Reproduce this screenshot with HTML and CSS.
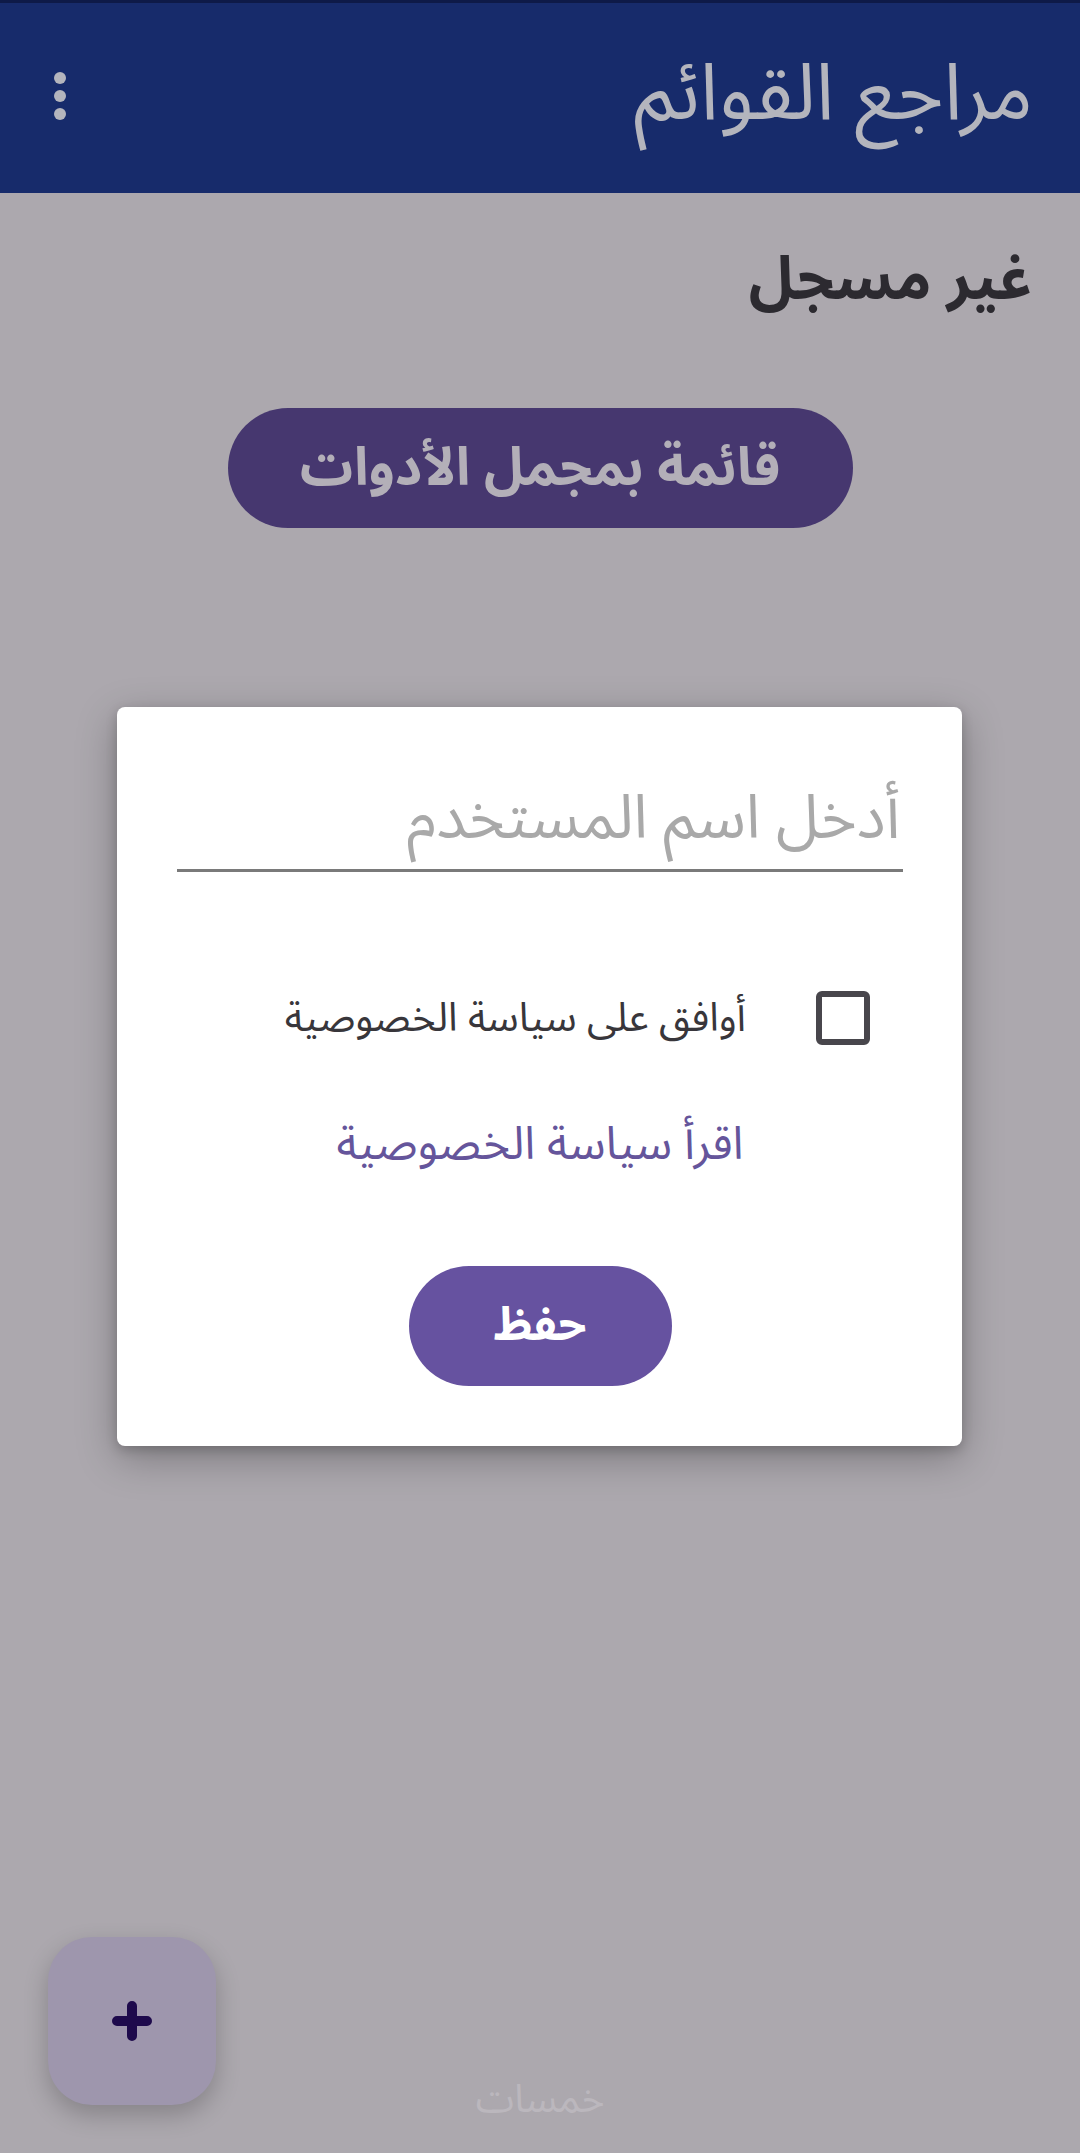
FILE: index.html
```html
<!DOCTYPE html>
<html lang="ar" dir="rtl">
<head>
<meta charset="utf-8">
<title>مراجع القوائم</title>
<link rel="stylesheet" href="styles.css">
</head>
<body>
<div class="screen">
  <header class="appbar">
    <h1 class="appbar-title">مراجع القوائم</h1>
    <button class="menu-btn" aria-label="المزيد">
      <span class="dot"></span><span class="dot"></span><span class="dot"></span>
    </button>
  </header>

  <main class="content">
    <h2 class="status">غير مسجل</h2>
    <div class="tools-wrap">
      <button class="tools-btn">قائمة بمجمل الأدوات</button>
    </div>
  </main>

  <div class="dialog">
    <div class="field">
      <div class="placeholder">أدخل اسم المستخدم</div>
    </div>
    <label class="agree-row">
      <span class="checkbox"></span>
      <span class="agree-text">أوافق على سياسة الخصوصية</span>
    </label>
    <a class="policy-link">اقرأ سياسة الخصوصية</a>
    <div class="save-wrap">
      <button class="save-btn">حفظ</button>
    </div>
  </div>

  <button class="fab" aria-label="إضافة">
    <svg width="40" height="40" viewBox="0 0 40 40">
      <path d="M20 5 V35 M5 20 H35" stroke="#1e0a4c" stroke-width="10" stroke-linecap="round" fill="none"/>
    </svg>
  </button>

  <div class="watermark">خمسات</div>
</div>
</body>
</html>
```

FILE: styles.css
```css
* { box-sizing: border-box; }

html, body {
  margin: 0;
  padding: 0;
}

body {
  width: 1080px;
  height: 2153px;
  background: #aca8ae;
  font-family: "Noto Sans Arabic", "Noto Naskh Arabic", "DejaVu Sans", sans-serif;
  overflow: hidden;
}

.screen {
  position: relative;
  width: 1080px;
  height: 2153px;
}

.appbar {
  height: 193px;
  background: #172b6b;
  border-top: 3px solid #0e1a48;
  display: flex;
  align-items: center;
  justify-content: space-between;
  padding: 0 47px 0 54px;
}

.appbar-title {
  margin: 0 0 10px;
  font-size: 79px;
  font-weight: 400;
  color: #b4b5bd;
  line-height: 1;
}

.menu-btn {
  background: none;
  border: 0;
  padding: 0;
  display: flex;
  flex-direction: column;
  gap: 6px;
  margin-top: -4px;
}

.dot {
  width: 12px;
  height: 12px;
  border-radius: 50%;
  background: #b4b5bd;
}

.content {
  padding: 0 48px;
}

.status {
  margin: 48px 0 0;
  font-size: 60px;
  font-weight: 700;
  color: #2c2a30;
  line-height: 1.3;
}

.tools-wrap {
  display: flex;
  justify-content: center;
  margin-top: 89px;
}

.tools-btn {
  width: 625px;
  height: 120px;
  border: 0;
  border-radius: 60px;
  background: #46376f;
  color: #b3afb8;
  font-family: inherit;
  font-size: 53px;
  font-weight: 700;
}

.dialog {
  position: absolute;
  left: 117px;
  top: 707px;
  width: 845px;
  height: 739px;
  background: #ffffff;
  border-radius: 8px;
  box-shadow: 0 12px 40px rgba(0, 0, 0, 0.28), 0 4px 12px rgba(0, 0, 0, 0.18);
  padding: 0 59px 0 60px;
}

.field {
  margin-top: 66px;
  border-bottom: 3px solid #7a7a7a;
  padding: 0 3px 4px;
}

.placeholder {
  font-size: 61px;
  color: #a9a9a9;
  line-height: 1.5;
}

.agree-row {
  display: flex;
  align-items: center;
  gap: 70px;
  margin-top: 104px;
  padding-right: 33px;
}

.checkbox {
  width: 54px;
  height: 54px;
  border: 6px solid #48464c;
  border-radius: 6px;
  flex: none;
}

.agree-text {
  font-size: 40px;
  color: #38363b;
}

.policy-link {
  display: block;
  text-align: center;
  margin-top: 49px;
  font-size: 46px;
  line-height: 1.5;
  color: #65559b;
}

.save-wrap {
  display: flex;
  justify-content: center;
  margin-top: 87px;
}

.save-btn {
  width: 263px;
  height: 120px;
  border: 0;
  border-radius: 60px;
  background: #6652a0;
  color: #ffffff;
  font-family: inherit;
  font-size: 46px;
  font-weight: 700;
}

.fab {
  position: absolute;
  left: 48px;
  top: 1937px;
  width: 168px;
  height: 168px;
  border: 0;
  border-radius: 44px;
  background: #9e96ad;
  box-shadow: 0 10px 24px rgba(0, 0, 0, 0.22);
  display: flex;
  align-items: center;
  justify-content: center;
  padding: 0;
}

.watermark {
  position: absolute;
  left: 0;
  right: 0;
  top: 2058px;
  text-align: center;
  font-size: 39px;
  color: #bbb7bd;
}
```
